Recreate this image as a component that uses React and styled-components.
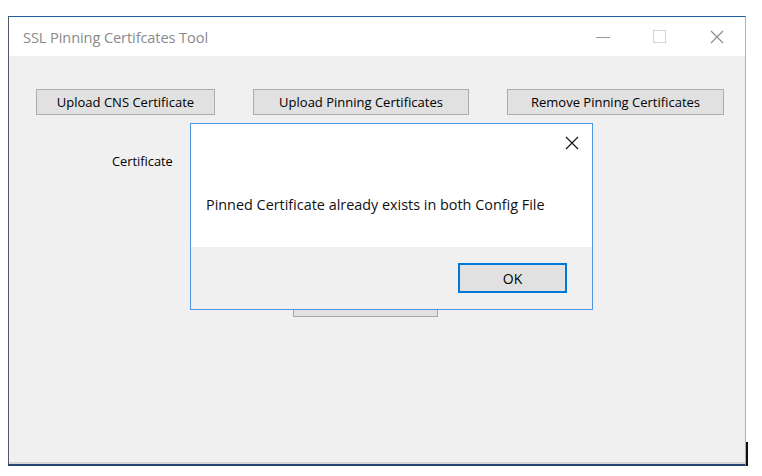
import React from "react";
import styled, { createGlobalStyle } from "styled-components";

const Global = createGlobalStyle`
  html, body { margin: 0; padding: 0; background: #ffffff; }
  body { font-family: "Open Sans", "Noto Sans", sans-serif; }
`;

const Page = styled.div`
  width: 762px;
  height: 476px;
  padding: 16px 0 0 8px;
  box-sizing: border-box;
`;

const Window = styled.div`
  position: relative;
  width: 738px;
  height: 450px;
  box-sizing: border-box;
  border-top: 1px solid #1f5d9c;
  border-left: 1px solid #4f5a66;
  border-right: 1px solid #8ab8e6;
  border-bottom: 2px solid #23476e;
  display: flex;
  flex-direction: column;
  background: #f0f0f0;
  box-shadow: inset 0 -2px 0 #d6d6d6;

  &::after {
    content: "";
    position: absolute;
    right: -3px;
    bottom: -2px;
    width: 2px;
    height: 24px;
    background: #111;
  }
`;

const TitleBar = styled.div`
  height: 39px;
  background: #ffffff;
  display: flex;
  align-items: center;
  padding-left: 14px;
  flex-shrink: 0;
`;

const Title = styled.div`
  flex: 1;
  font-size: 14.6px;
  color: #8a8a8a;
  letter-spacing: -0.1px;
`;

const CaptionButton = styled.div`
  width: 57px;
  height: 39px;
  display: flex;
  align-items: center;
  justify-content: center;
`;

const Client = styled.div`
  flex: 1;
  display: flex;
  flex-direction: column;
  padding: 33px 0 0 27px;
`;

const ButtonRow = styled.div`
  display: flex;
  gap: 38px;
`;

const WinButton = styled.button`
  width: ${(p) => p.$w}px;
  height: 26px;
  box-sizing: border-box;
  background: #e1e1e1;
  border: 1px solid #adadad;
  font-family: "Open Sans", "Noto Sans", sans-serif;
  font-size: 13px;
  color: #000;
  padding: 0;
  margin: 0;
  display: flex;
  align-items: center;
  justify-content: center;
`;

const Label = styled.div`
  margin: 37px 0 0 76px;
  font-size: 12.8px;
  color: #000;
`;

const HiddenButton = styled(WinButton)`
  margin: 121px 0 0 257px;
  border-color: #a8a8a8;
`;

const Dialog = styled.div`
  position: absolute;
  left: 181px;
  top: 106px;
  width: 403px;
  height: 187px;
  box-sizing: border-box;
  border: 1px solid #4a97e0;
  background: #f0f0f0;
  display: flex;
  flex-direction: column;
`;

const DialogBody = styled.div`
  position: relative;
  height: 123px;
  background: #ffffff;
  display: flex;
  align-items: center;
  padding: 37px 0 0 15px;
  box-sizing: border-box;
`;

const DialogClose = styled.div`
  position: absolute;
  right: 13px;
  top: 12px;
  width: 14px;
  height: 14px;
  display: flex;
`;

const Message = styled.div`
  font-size: 14.4px;
  color: #111;
`;

const DialogFooter = styled.div`
  flex: 1;
  display: flex;
  justify-content: flex-end;
  align-items: flex-start;
  padding: 16px 25px 0 0;
`;

const OkButton = styled.button`
  width: 109px;
  height: 30px;
  box-sizing: border-box;
  background: #e1e1e1;
  border: 2px solid #0078d7;
  font-family: "Open Sans", "Noto Sans", sans-serif;
  font-size: 14px;
  color: #000;
  padding: 0;
`;

const X = ({ size = 14, color = "#222", w = 1.3 }) => (
  <svg width={size} height={size} viewBox="0 0 14 14">
    <path d="M1 1 L13 13 M13 1 L1 13" stroke={color} strokeWidth={w} fill="none" />
  </svg>
);

export default function App() {
  return (
    <>
      <Global />
      <Page>
        <Window>
          <TitleBar>
            <Title>SSL Pinning Certifcates Tool</Title>
            <CaptionButton>
              <svg width="14" height="14" viewBox="0 0 14 14">
                <path d="M0 7.5 H14" stroke="#9a9a9a" strokeWidth="1" />
              </svg>
            </CaptionButton>
            <CaptionButton>
              <svg width="13" height="13" viewBox="0 0 13 13">
                <rect x="0.5" y="0.5" width="12" height="12" stroke="#d4d4d4" fill="none" />
              </svg>
            </CaptionButton>
            <CaptionButton>
              <X size={14} color="#8a8a8a" w={1.1} />
            </CaptionButton>
          </TitleBar>
          <Client>
            <ButtonRow>
              <WinButton $w={179}>Upload CNS Certificate</WinButton>
              <WinButton $w={216}>Upload Pinning Certificates</WinButton>
              <WinButton $w={217}>Remove Pinning Certificates</WinButton>
            </ButtonRow>
            <Label>Certificate</Label>
            <HiddenButton $w={145}>Save</HiddenButton>
          </Client>
          <Dialog>
            <DialogBody>
              <DialogClose>
                <X size={14} color="#1a1a1a" w={1.3} />
              </DialogClose>
              <Message>Pinned Certificate already exists in both Config File</Message>
            </DialogBody>
            <DialogFooter>
              <OkButton>OK</OkButton>
            </DialogFooter>
          </Dialog>
        </Window>
      </Page>
    </>
  );
}
